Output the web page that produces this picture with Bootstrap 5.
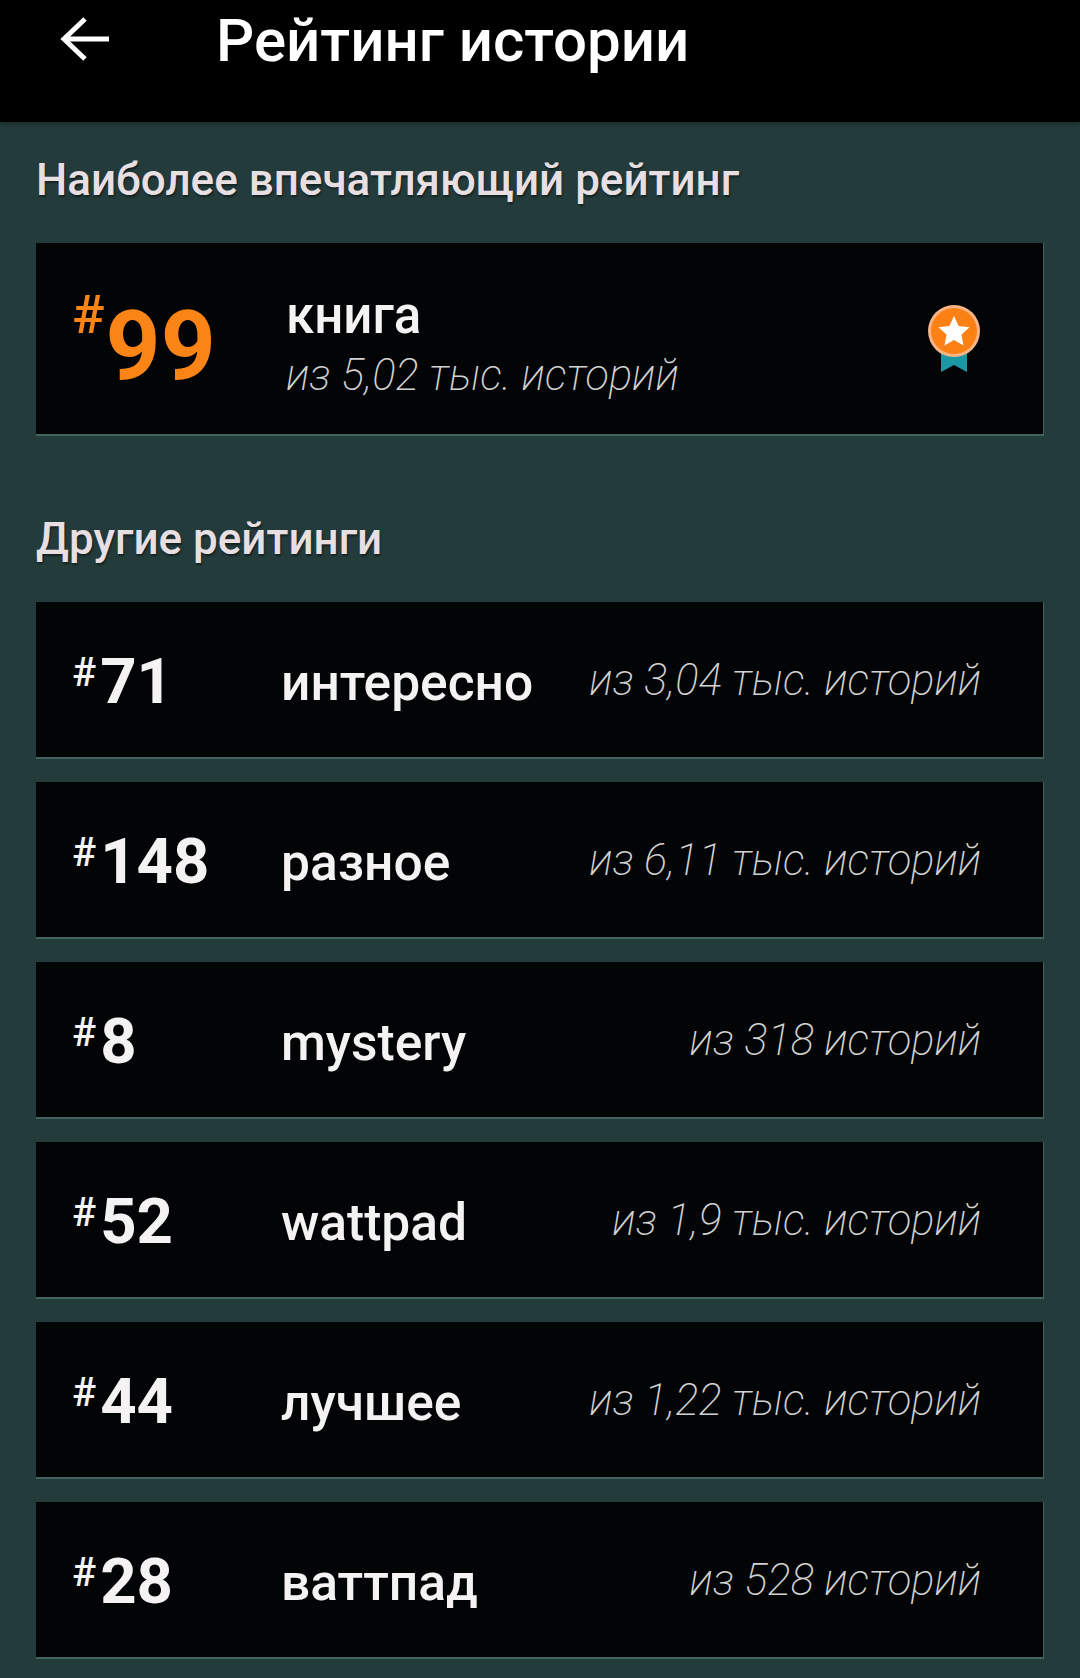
<!DOCTYPE html>
<html lang="ru">
<head>
    <meta charset="UTF-8">
    <meta name="viewport" content="width=device-width, initial-scale=1.0">
    <title>Рейтинг истории</title>
    <link href="https://cdn.jsdelivr.net/npm/bootstrap@5.3.0/dist/css/bootstrap.min.css" rel="stylesheet">
    <style>
        body { background-color: #233c3b; font-family: Roboto, "Liberation Sans", sans-serif; color: #fff; }
        .top-bar { height: 122px; background-color: #000; padding-left: 60px; box-shadow: 0 3px 4px rgba(0,0,0,.25); }
        .back-icon { width: 50px; height: 46px; margin-top: 16px; flex: none; }
        .page-title { font-size: 60px; font-weight: 500; line-height: 1; margin: 11px 0 0 106px; }
        .content-wrap { padding: 0 36px 20px; }
        .section-title { font-size: 44px; font-weight: 500; line-height: 1; color: #e8dfe3; text-shadow: 1px 2px 2px rgba(0,0,0,.45); }
        .title-first { margin-top: 36px; margin-bottom: 41px; }
        .title-second { margin-top: 81px; margin-bottom: 41px; }
        .rank-row { height: 157px; background-color: #020405; border-right: 1px solid #42625e; border-bottom: 2px solid #42625e; padding: 3px 62px 0 36px; margin-bottom: 23px; }
        .rank-best { height: 193px; margin-bottom: 0; padding-top: 0; }
        .rank-num { width: 209px; flex: none; font-weight: 700; font-size: 63.500px; line-height: 1; color: #f5f2f4; display: flex; align-items: flex-start; margin-top: 2px; }
        .rank-num .hash { font-size: 40px; font-weight: 500; margin-right: 4px; line-height: 1; margin-top: 3px; }
        .rank-best .rank-num { width: 214px; font-size: 96px; color: #fb8417; margin-top: 15px; }
        .rank-best .rank-num .hash { font-size: 54px; margin-top: -10px; margin-right: 1px; }
        .tag-name { font-size: 51.500px; font-weight: 500; line-height: 1.1; color: #f5f2f4; margin-top: 5px; }
        .story-count { font-size: 43.400px; font-weight: 200; font-style: italic; line-height: 1.1; color: #d2d2d2; white-space: nowrap; }
        .best-text { margin-top: 10px; }
        .best-text .tag-name { margin-top: 0; font-size: 51px; }
        .best-text .story-count { font-size: 43.500px; }
        .medal-icon { width: 54px; height: 68px; flex: none; margin-top: -1px; }
    </style>
</head>
<body>
    <div class="top-bar d-flex align-items-start">
        <svg class="back-icon" viewBox="0 0 50 46" fill="none" stroke="#fff" stroke-width="5">
            <path d="M49 23H4M25 3 4 23l21 20"/>
        </svg>
        <div class="page-title">Рейтинг истории</div>
    </div>

    <div class="content-wrap">
        <div class="section-title title-first">Наиболее впечатляющий рейтинг</div>

        <div class="rank-row rank-best d-flex align-items-center">
            <div class="rank-num"><span class="hash">#</span><span>99</span></div>
            <div class="best-text flex-grow-1">
                <div class="tag-name">книга</div>
                <div class="story-count mt-2">из 5,02 тыс. историй</div>
            </div>
            <svg class="medal-icon" viewBox="0 0 54 68">
                <path d="M14 44h26v24l-13-7-13 7z" fill="#1c97a6"/>
                <circle cx="27" cy="27" r="26" fill="#f9b487"/>
                <circle cx="27" cy="27" r="23" fill="#fb8114"/>
                <path d="M27 12l4.6 10 10.9 1.3-8.1 7.4 2.2 10.8L27 36.100l-9.600 5.400 2.200-10.800-8.100-7.400L22.400 22z" fill="#fff"/>
            </svg>
        </div>

        <div class="section-title title-second">Другие рейтинги</div>

        <div id="rank-list"></div>
    </div>

    <script>
        // Список остальных рейтингов
        const ranks = [
            { num: 71, tag: 'интересно', count: 'из 3,04 тыс. историй' },
            { num: 148, tag: 'разное', count: 'из 6,11 тыс. историй' },
            { num: 8, tag: 'mystery', count: 'из 318 историй' },
            { num: 52, tag: 'wattpad', count: 'из 1,9 тыс. историй' },
            { num: 44, tag: 'лучшее', count: 'из 1,22 тыс. историй' },
            { num: 28, tag: 'ваттпад', count: 'из 528 историй' }
        ];
        const list = document.getElementById('rank-list');
        ranks.forEach(r => {
            const row = document.createElement('div');
            row.className = 'rank-row d-flex align-items-center';
            row.innerHTML = `
                <div class="rank-num"><span class="hash">#</span><span>${r.num}</span></div>
                <div class="tag-name flex-grow-1">${r.tag}</div>
                <div class="story-count">${r.count}</div>
            `;
            list.appendChild(row);
        });
    </script>
    <script src="https://cdn.jsdelivr.net/npm/bootstrap@5.3.0/dist/js/bootstrap.bundle.min.js"></script>
</body>
</html>
